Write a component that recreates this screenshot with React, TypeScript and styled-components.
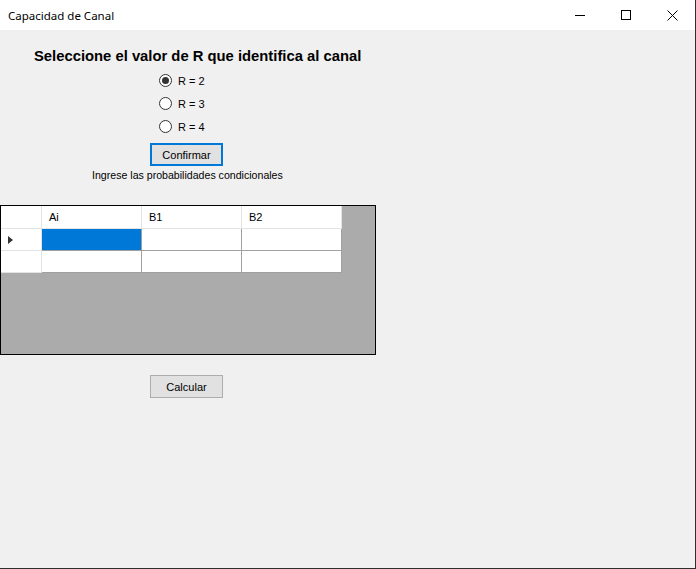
import React from "react";
import styled, { createGlobalStyle } from "styled-components";

const Global = createGlobalStyle`
  html, body { margin: 0; padding: 0; background: #f0f0f0; }
  body { font-family: "Liberation Sans", Arial, sans-serif; }
`;

const Window = styled.div`
  width: 696px;
  height: 569px;
  box-sizing: border-box;
  border-right: 1px solid #2e2e2e;
  border-bottom: 1px solid #2e2e2e;
  background: #f0f0f0;
  display: flex;
  flex-direction: column;
  overflow: hidden;
`;

const TitleBar = styled.div`
  height: 30px;
  flex: none;
  background: #ffffff;
  display: flex;
  align-items: center;
`;

const Title = styled.div`
  flex: 1;
  padding-left: 8px;
  font-family: "Noto Sans", "Open Sans", sans-serif;
  font-size: 11.5px;
  color: #000;
`;

const CaptionButton = styled.div`
  width: 46px;
  height: 30px;
  display: flex;
  align-items: center;
  justify-content: center;
`;

const Content = styled.div`
  flex: 1;
  display: flex;
  flex-direction: column;
  align-items: flex-start;
  padding-top: 18px;
`;

const Heading = styled.div`
  margin-left: 34px;
  font-size: 14.8px;
  font-weight: bold;
  line-height: 16px;
  color: #000;
`;

const RadioGroup = styled.div`
  margin-left: 159px;
  margin-top: 5px;
  display: flex;
  flex-direction: column;
`;

const RadioRow = styled.label`
  height: 23px;
  display: flex;
  align-items: center;
  gap: 6px;
  font-size: 11px;
  color: #000;
`;

const RadioCircle = styled.span<{ $checked?: boolean }>`
  width: 13px;
  height: 13px;
  box-sizing: border-box;
  border: 1px solid #333;
  border-radius: 50%;
  background: #fff;
  display: flex;
  align-items: center;
  justify-content: center;
  &::after {
    content: "";
    width: 7px;
    height: 7px;
    border-radius: 50%;
    background: ${(p) => (p.$checked ? "#333" : "transparent")};
  }
`;

const Button = styled.div<{ $focused?: boolean; $mt: number }>`
  margin-left: 150px;
  margin-top: ${(p) => p.$mt}px;
  width: 73px;
  height: 23px;
  box-sizing: border-box;
  border: ${(p) => (p.$focused ? "2px solid #0078d7" : "1px solid #adadad")};
  background: #e1e1e1;
  display: flex;
  align-items: center;
  justify-content: center;
  font-size: 11px;
  color: #000;
`;

const Caption = styled.div`
  margin-left: 92px;
  margin-top: 2px;
  font-size: 10.6px;
  line-height: 14px;
  color: #000;
`;

const Grid = styled.div`
  margin-top: 23px;
  width: 376px;
  height: 150px;
  box-sizing: border-box;
  border: 1px solid #000;
  background: #ababab;
  display: grid;
  grid-template-columns: 41px 100px 100px 100px;
  grid-template-rows: 23px 22px 22px;
  align-content: start;
`;

const Cell = styled.div<{ $header?: boolean; $selected?: boolean; $rowHeader?: boolean }>`
  box-sizing: border-box;
  background: ${(p) => (p.$selected ? "#0078d7" : "#ffffff")};
  border-right: 1px solid ${(p) => (p.$header || p.$rowHeader ? "#e3e3e3" : "#a0a0a0")};
  border-bottom: 1px solid ${(p) => (p.$header || p.$rowHeader ? "#e3e3e3" : "#a0a0a0")};
  font-size: 11px;
  color: #000;
  display: flex;
  align-items: center;
  padding-left: ${(p) => (p.$rowHeader ? "7px" : "7px")};
`;

const Arrow = styled.span`
  width: 0;
  height: 0;
  border-top: 4px solid transparent;
  border-bottom: 4px solid transparent;
  border-left: 5px solid #333;
`;

export default function App() {
  return (
    <>
      <Global />
      <Window>
        <TitleBar>
          <Title>Capacidad de Canal</Title>
          <CaptionButton>
            <svg width="10" height="10" viewBox="0 0 10 10">
              <path d="M0 5.5h10" stroke="#000" strokeWidth="1" />
            </svg>
          </CaptionButton>
          <CaptionButton>
            <svg width="10" height="10" viewBox="0 0 10 10">
              <rect x="0.5" y="0.5" width="9" height="9" fill="none" stroke="#000" strokeWidth="1" />
            </svg>
          </CaptionButton>
          <CaptionButton>
            <svg width="11" height="11" viewBox="0 0 11 11">
              <path d="M0.5 0.5L10.5 10.5M10.5 0.5L0.5 10.5" stroke="#000" strokeWidth="1" />
            </svg>
          </CaptionButton>
        </TitleBar>
        <Content>
          <Heading>Seleccione el valor de R que identifica al canal</Heading>
          <RadioGroup>
            <RadioRow>
              <RadioCircle $checked />
              R = 2
            </RadioRow>
            <RadioRow>
              <RadioCircle />
              R = 3
            </RadioRow>
            <RadioRow>
              <RadioCircle />
              R = 4
            </RadioRow>
          </RadioGroup>
          <Button $focused $mt={5}>Confirmar</Button>
          <Caption>Ingrese las probabilidades condicionales</Caption>
          <Grid>
            <Cell $rowHeader />
            <Cell $header>Ai</Cell>
            <Cell $header>B1</Cell>
            <Cell $header>B2</Cell>
            <Cell $rowHeader>
              <Arrow />
            </Cell>
            <Cell $selected />
            <Cell />
            <Cell />
            <Cell $rowHeader />
            <Cell />
            <Cell />
            <Cell />
          </Grid>
          <Button $mt={20}>Calcular</Button>
        </Content>
      </Window>
    </>
  );
}
